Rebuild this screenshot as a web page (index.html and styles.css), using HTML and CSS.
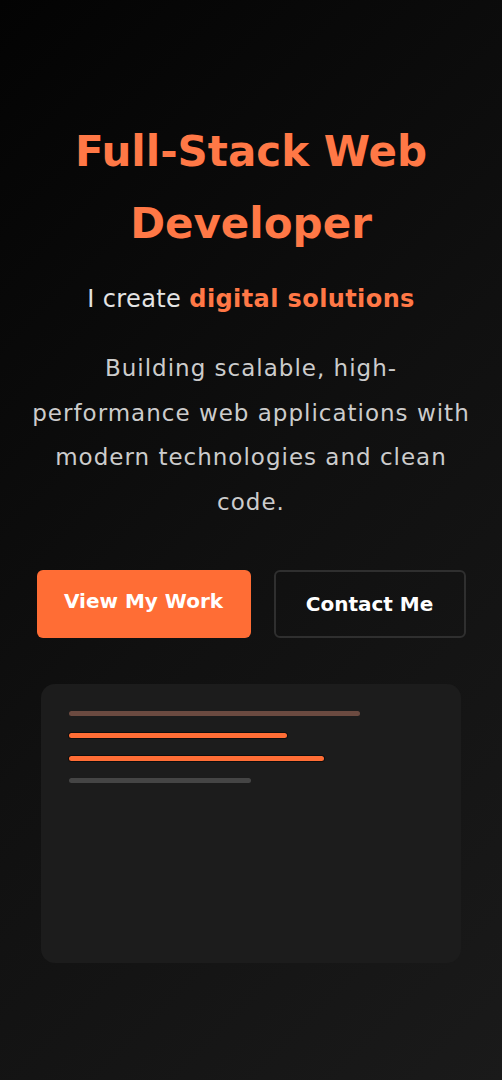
FILE: index.html
```html
<!DOCTYPE html>
<html lang="en">
<head>
<meta charset="utf-8">
<title>Full-Stack Web Developer</title>
<link rel="stylesheet" href="styles.css">
</head>
<body>
<main class="hero">
  <h1 class="hero-title">Full-Stack Web Developer</h1>
  <p class="hero-sub">I create <span class="accent">digital solutions</span></p>
  <p class="hero-desc">Building scalable, high-performance web applications with modern technologies and clean code.</p>
  <div class="hero-actions">
    <a class="btn btn-primary" href="#work">View My Work</a>
    <a class="btn btn-outline" href="#contact">Contact Me</a>
  </div>
  <div class="code-card">
    <div class="code-line line-muted" style="width:80%"></div>
    <div class="code-line line-accent" style="width:60%"></div>
    <div class="code-line line-accent" style="width:70%"></div>
    <div class="code-line line-gray" style="width:50%"></div>
  </div>
</main>
</body>
</html>
```
FILE: styles.css
```css
* { box-sizing: border-box; }
html, body { margin: 0; padding: 0; }
body {
  min-height: 1080px;
  background: linear-gradient(135deg, #030303 0%, #101010 50%, #1a1a1a 100%);
  font-family: "DejaVu Sans", "Open Sans", sans-serif;
  color: #fff;
}
.hero {
  display: flex;
  flex-direction: column;
  align-items: center;
  padding: 116px 30px 0;
  text-align: center;
}
.hero-title {
  margin: 0;
  font-size: 42px;
  line-height: 72px;
  font-weight: 700;
  color: #ff7846;
  max-width: 420px;
}
.hero-sub {
  margin: 21px 0 0;
  font-size: 24px;
  line-height: 36px;
  letter-spacing: 0.4px;
  color: #e4e4e4;
}
.accent { color: #ff7846; font-weight: 700; }
.hero-desc {
  margin: 29px 0 0;
  font-size: 23px;
  line-height: 44.5px;
  letter-spacing: 1px;
  color: #cccccc;
  max-width: 442px;
}
.hero-actions {
  display: flex;
  gap: 23px;
  margin-top: 46px;
}
.btn {
  display: flex;
  align-items: center;
  justify-content: center;
  height: 68px;
  border-radius: 6px;
  font-size: 20px;
  font-weight: 700;
  color: #fff;
  text-decoration: none;
}
.btn-primary {
  width: 214px;
  background: #ff6d35;
  padding-bottom: 6px;
}
.btn-outline {
  width: 192px;
  border: 2px solid #2f2f2f;
  background: transparent;
}
.code-card {
  width: 420px;
  height: 279px;
  margin-top: 46px;
  padding: 27px 28px;
  background: #1c1c1c;
  border-radius: 14px;
  display: flex;
  flex-direction: column;
  gap: 17.3px;
}
.code-line {
  height: 5px;
  border-radius: 3px;
}
.line-muted { background: #6b4a40; }
.line-accent { background: #ff6d35; box-shadow: 0 0 0 1px rgba(0,0,0,0.5); }
.line-gray { background: #454545; }
```
